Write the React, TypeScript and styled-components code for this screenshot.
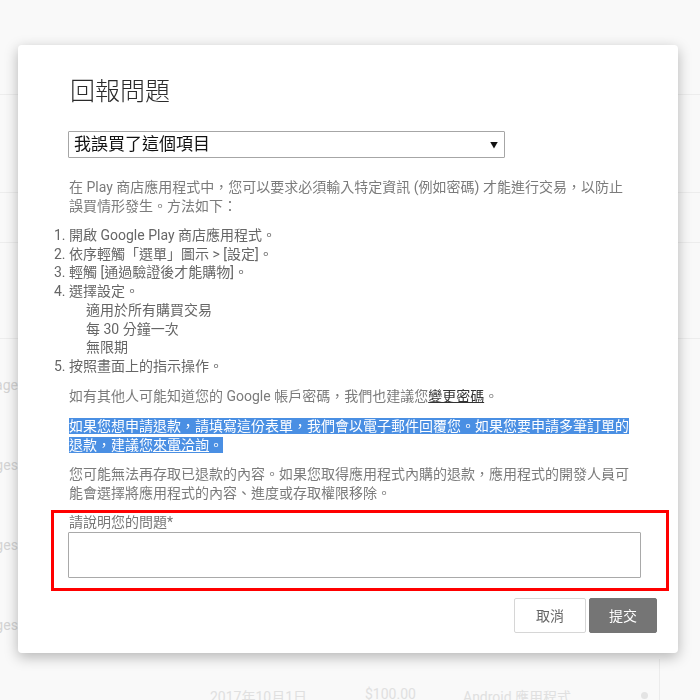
import React from 'react';
import styled, { createGlobalStyle } from 'styled-components';

const GlobalStyle = createGlobalStyle`
  html, body {
    margin: 0;
    padding: 0;
    background: #f9f9f9;
    font-family: Roboto, "Noto Sans CJK TC", "Noto Sans", sans-serif;
  }
  * { box-sizing: border-box; }
  ::selection { background: #4a8fe3; color: #fff; }
`;

/* faded page behind the dialog */
const Page = styled.div`
  height: 700px;
  overflow: hidden;
  background: #f9f9f9;
`;

const PageRow = styled.div<{ $h: number; $line?: boolean }>`
  height: ${({ $h }) => $h}px;
  border-bottom: 1px solid ${({ $line }) => ($line ? '#ededed' : 'transparent')};
  display: flex;
  align-items: center;
  padding-top: 12px;
`;

const NavLabel = styled.span`
  margin-left: -21px;
  font-size: 14px;
  color: #d4d4d4;
`;

const ListRow = styled.div`
  display: flex;
  align-items: flex-start;
  padding-top: 27px;
  font-size: 14px;
  color: #e0e0e0;
  border-right: 1px solid #ececec;
  width: 660px;
  height: 80px;
`;

const Cell = styled.span<{ $w: number }>`
  width: ${({ $w }) => $w}px;
  flex: none;
`;

const Dot = styled.span`
  width: 7px;
  height: 7px;
  margin-top: 6px;
  border-radius: 50%;
  background: #e4e4e4;
`;

/* dialog */
const Dialog = styled.div`
  position: fixed;
  top: 45px;
  left: 18px;
  width: 660px;
  height: 608px;
  background: #fff;
  border-radius: 4px;
  box-shadow: 0 4px 14px rgba(0, 0, 0, 0.28);
  padding: 31px 37px 0 50px;
  display: flex;
  flex-direction: column;
`;

const Title = styled.h1`
  margin: 0 0 0 2px;
  font-size: 25px;
  line-height: 32px;
  font-weight: 300;
  color: #2b2b2b;
`;

const SelectBox = styled.div`
  position: relative;
  margin-top: 23px;
  width: 437px;
  height: 27px;
  border: 1px solid #a6a6a6;
  border-radius: 1px;
  padding-left: 5px;
  font-size: 17px;
  line-height: 25px;
  color: #111;

  &::after {
    content: '▼';
    position: absolute;
    right: 6px;
    top: 1px;
    font-size: 8px;
    color: #111;
  }
`;

const Text = styled.p<{ $mt: number }>`
  margin: ${({ $mt }) => $mt}px 0 0 1px;
  max-width: 566px;
  font-size: 14px;
  line-height: 19px;
  color: #7b7b7b;
`;

const Steps = styled.ol`
  margin: 10px 0 0 0;
  padding: 0 0 0 1px;
  font-size: 14px;
  line-height: 18.7px;
  color: #666;
  list-style-position: outside;
`;

const SubSteps = styled.ul`
  margin: 0;
  padding: 0 0 0 17px;
  list-style: none;
`;

const Link = styled.a`
  color: #333;
  text-decoration: underline;
`;

const Marked = styled.span`
  background: #4a8fe3;
  color: #fff;
`;

const MarkedLink = styled.span`
  text-decoration: underline;
`;

const FieldFrame = styled.div`
  margin: 7px -28px 0 -17px;
  border: 3px solid #ff0000;
  padding: 0 25px 10px 14px;
`;

const FieldLabel = styled.label`
  display: block;
  margin-left: 1px;
  font-size: 14px;
  line-height: 19px;
  color: #777;
`;

const TextArea = styled.textarea`
  display: block;
  width: 573px;
  height: 46px;
  margin-top: 0;
  border: 1px solid #a9a9a9;
  border-radius: 1px;
  resize: none;
  font-family: inherit;
  font-size: 14px;
`;

const Actions = styled.div`
  display: flex;
  justify-content: flex-end;
  gap: 3px;
  margin: 7px -16px 0 0;
`;

const Button = styled.button<{ $primary?: boolean }>`
  height: 35px;
  padding: 0 ${({ $primary }) => ($primary ? 19 : 21)}px;
  border-radius: 2px;
  border: 1px solid ${({ $primary }) => ($primary ? '#757575' : '#d6d6d6')};
  background: ${({ $primary }) => ($primary ? '#757575' : '#fff')};
  color: ${({ $primary }) => ($primary ? '#fff' : '#666')};
  font-family: inherit;
  font-size: 14px;
  cursor: pointer;
`;

const rows = [95, 98, 50, 96];

export default function App() {
  return (
    <>
      <GlobalStyle />
      <Page>
        {rows.map((h, i) => (
          <PageRow key={i} $h={h} $line />
        ))}
        {['Images', 'Pages', 'Pages', 'Pages'].map((label, i) => (
          <PageRow key={`n${i}`} $h={80}>
            <NavLabel>{label}</NavLabel>
          </PageRow>
        ))}
        <ListRow>
          <Cell $w={210} />
          <Cell $w={155}>2017年10月1日</Cell>
          <Cell $w={98}>$100.00</Cell>
          <Cell $w={178}>Android 應用程式</Cell>
          <Dot />
        </ListRow>
      </Page>

      <Dialog role="dialog">
        <Title>回報問題</Title>
        <SelectBox>我誤買了這個項目</SelectBox>

        <Text $mt={20}>
          在 Play 商店應用程式中，您可以要求必須輸入特定資訊 (例如密碼) 才能進行交易，以防止誤買情形發生。方法如下：
        </Text>

        <Steps>
          <li>開啟 Google Play 商店應用程式。</li>
          <li>依序輕觸「選單」圖示 &gt; [設定]。</li>
          <li>輕觸 [通過驗證後才能購物]。</li>
          <li>
            選擇設定。
            <SubSteps>
              <li>適用於所有購買交易</li>
              <li>每 30 分鐘一次</li>
              <li>無限期</li>
            </SubSteps>
          </li>
          <li>按照畫面上的指示操作。</li>
        </Steps>

        <Text $mt={11}>
          如有其他人可能知道您的 Google 帳戶密碼，我們也建議您<Link href="#">變更密碼</Link>。
        </Text>

        <Text $mt={11}>
          <Marked>
            如果您想申請退款，請填寫這份表單，我們會以電子郵件回覆您。如果您要申請多筆訂單的退款，建議您
            <MarkedLink>來電洽詢</MarkedLink>。
          </Marked>
        </Text>

        <Text $mt={10}>
          您可能無法再存取已退款的內容。如果您取得應用程式內購的退款，應用程式的開發人員可能會選擇將應用程式的內容、進度或存取權限移除。
        </Text>

        <FieldFrame>
          <FieldLabel htmlFor="issue">請說明您的問題*</FieldLabel>
          <TextArea id="issue" />
        </FieldFrame>

        <Actions>
          <Button>取消</Button>
          <Button $primary>提交</Button>
        </Actions>
      </Dialog>
    </>
  );
}
